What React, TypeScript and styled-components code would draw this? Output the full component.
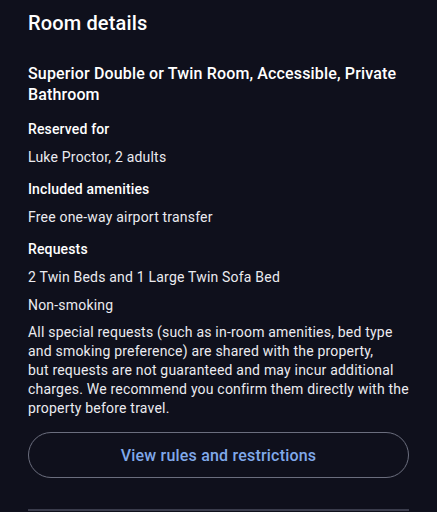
import React from "react";
import styled, { createGlobalStyle } from "styled-components";

const GlobalStyle = createGlobalStyle`
  html, body {
    margin: 0;
    padding: 0;
    background: #0f101c;
  }
  body {
    font-family: Roboto, "Liberation Sans", sans-serif;
    color: #ebebf0;
  }
`;

const Page = styled.div`
  width: 437px;
  height: 512px;
  overflow: hidden;
  box-sizing: border-box;
  padding: 9px 28px 0 28px;
  display: flex;
  flex-direction: column;
`;

const Title = styled.h1`
  margin: 0;
  font-size: 20px;
  font-weight: 500;
  line-height: 28px;
  letter-spacing: 0.15px;
  color: #ffffff;
`;

const RoomName = styled.h2`
  margin: 26px 0 0 0;
  font-size: 16px;
  font-weight: 500;
  line-height: 21px;
  letter-spacing: 0.15px;
  color: #ffffff;
`;

const Section = styled.section<{ $first?: boolean }>`
  display: flex;
  flex-direction: column;
  margin-top: ${(p) => (p.$first ? "14px" : "12px")};
`;

const Label = styled.h3`
  margin: 0;
  font-size: 14px;
  font-weight: 500;
  line-height: 20px;
  letter-spacing: 0.15px;
  color: #ffffff;
`;

const Line = styled.p`
  margin: 8px 0 0 0;
  font-size: 14px;
  font-weight: 400;
  line-height: 20px;
  letter-spacing: 0.2px;
  color: #ebebf0;
`;

const Note = styled(Line)`
  line-height: 19px;
`;

const OutlineButton = styled.button`
  margin-top: 14px;
  height: 46px;
  width: 100%;
  flex-shrink: 0;
  border: 1px solid #6b6e7e;
  border-radius: 23px;
  background: transparent;
  color: #80a9ea;
  font-family: Roboto, "Liberation Sans", sans-serif;
  font-size: 16px;
  font-weight: 500;
  letter-spacing: 0.2px;
  cursor: pointer;
`;

const Divider = styled.hr`
  margin: 31px 0 0 0;
  border: none;
  height: 2px;
  flex-shrink: 0;
  background: #3a3c4c;
`;

export default function App() {
  return (
    <>
      <GlobalStyle />
      <Page>
        <Title>Room details</Title>
        <RoomName>Superior Double or Twin Room, Accessible, Private Bathroom</RoomName>
        <Section $first>
          <Label>Reserved for</Label>
          <Line>Luke Proctor, 2 adults</Line>
        </Section>
        <Section>
          <Label>Included amenities</Label>
          <Line>Free one-way airport transfer</Line>
        </Section>
        <Section>
          <Label>Requests</Label>
          <Line>2 Twin Beds and 1 Large Twin Sofa Bed</Line>
          <Line>Non-smoking</Line>
          <Note>
            All special requests (such as in-room amenities, bed type and smoking preference) are
            shared with the property,
            <br />
            but requests are not guaranteed and may incur additional charges. We recommend you
            confirm them directly with the property before travel.
          </Note>
        </Section>
        <OutlineButton>View rules and restrictions</OutlineButton>
        <Divider />
      </Page>
    </>
  );
}
